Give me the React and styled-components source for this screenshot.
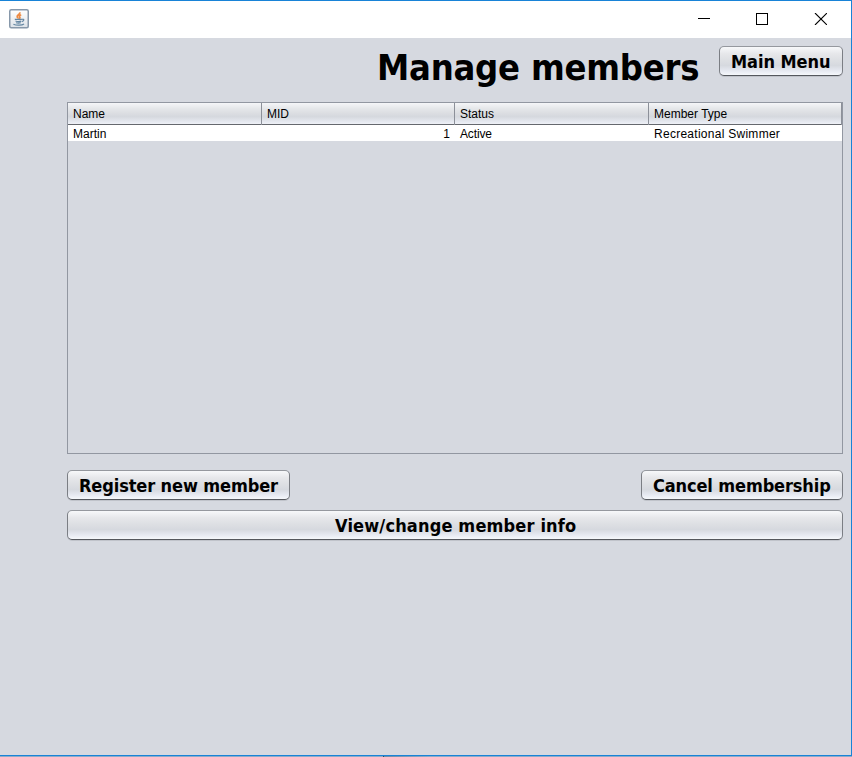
import React from "react";
import styled, { createGlobalStyle } from "styled-components";

const GlobalStyle = createGlobalStyle`
  * { box-sizing: border-box; }
  body { margin: 0; background: #fff; color: #000; overflow: hidden; }
`;

const Window = styled.div`
  width: 852px;
  height: 757px;
  display: flex;
  flex-direction: column;
  background: #d6d9e0;
  border-top: 1px solid #1883d7;
  border-right: 1px solid #1883d7;
`;

const TitleBar = styled.header`
  height: 37px;
  flex: none;
  display: flex;
  align-items: flex-start;
  justify-content: space-between;
  background: #fff;
  padding: 8px 0 0 9px;
`;

const WindowControls = styled.div`
  display: flex;
  gap: 46px;
  padding: 4px 24px 0 0;
`;

const Content = styled.main`
  flex: 1;
  display: flex;
  flex-direction: column;
  padding: 8px 8px 0 67px;
`;

const Heading = styled.div`
  display: flex;
  justify-content: flex-end;
  gap: 19px;
  height: 56px;
`;

const Title = styled.h1`
  margin: 0;
  width: 323px;
  white-space: nowrap;
  font: bold 36px/44px "DejaVu Sans Condensed", "DejaVu Sans", sans-serif;
  font-stretch: condensed;
  letter-spacing: ${(p) => p.$spacing}px;
`;

const Button = styled.button`
  width: ${(p) => p.$width}px;
  height: 30px;
  padding: 0 0 0 ${(p) => p.$inset}px;
  display: block;
  text-align: left;
  white-space: nowrap;
  color: #000;
  font: bold 18px/28px "DejaVu Sans Condensed", "DejaVu Sans", sans-serif;
  font-stretch: condensed;
  letter-spacing: ${(p) => p.$spacing}px;
  border: 1px solid;
  border-color: #95989e #7b7e84 #55585e #7b7e84;
  border-radius: 5px;
  background: linear-gradient(#f7f8fa 0, #e6e7ea 25%, #dddfe3 48%, #d6d9df 66%, #e7eaf2 86%, #f6f8fc 100%);
  box-shadow: 0 1px 0 #c0c3ca;
`;

const ButtonLabel = styled.span`
  display: block;
  height: 28px;
  line-height: 30px;
`;

const TablePane = styled.section`
  height: 352px;
  border: 1px solid #9297a1;
`;

const Row = styled.div`
  display: grid;
  grid-template-columns: 194px 193px 194px 193px;
  font: 12px/16px "Liberation Sans", Arial, sans-serif;
`;

const HeaderRow = styled(Row)`
  height: 22px;
  line-height: 22px;
  border-bottom: 1px solid #65686e;
  background: linear-gradient(#f5f6f8 0, #e4e6e9 28%, #dcdee2 48%, #d5d8de 65%, #e8ebf2 92%, #eff1f6 100%);
`;

const HeaderCell = styled.div`
  padding-left: 5px;
  border-right: 1px solid #8c9099;
`;

const DataRow = styled(Row)`
  height: 16px;
  background: #fff;
`;

const Cell = styled.div`
  padding: 1px 5px 0;
  line-height: 17px;
  text-align: ${(p) => (p.$numeric ? "right" : "left")};
  letter-spacing: ${(p) => p.$spacing || 0}px;
`;

const Actions = styled.div`
  display: flex;
  justify-content: space-between;
  margin: 16px 0 10px;
`;

const BottomEdge = styled.footer`
  height: 2px;
  flex: none;
  margin-right: -1px;
  border-top: 1px solid #1883d7;
  background: linear-gradient(90deg, #8dabc8 0 383px, #34495e 383px 384px, #6f8ca8 384px, #8dabc8 430px);
`;

function JavaIcon() {
  return (
    <svg width="20" height="20" viewBox="0 0 20 20">
      <defs>
        <linearGradient id="tile" x2="0" y2="1">
          <stop stopColor="#fff" />
          <stop offset="1" stopColor="#dde2e8" />
        </linearGradient>
      </defs>
      <rect x=".75" y=".75" width="18.5" height="18" rx="1.5" fill="url(#tile)" stroke="#8798aa" strokeWidth="1.5" />
      <path d="M10.8 3.2c.8 2.1-3.6 3-2.6 4.8.3.8 1 .9.9 1.7M12.2 5.7c-2.6 1.1-2 1.8-1.4 2.4.5.6-.2 1.3-.7 1.6" fill="none" stroke="#ee8a42" strokeWidth="1.7" />
      <path d="M5.8 10.3h7.1M6.5 12c2 .8 4 .7 5.8.1M7 13.7c1.8.6 3.4.5 4.8 0M13 10.3c2.6-.5 2.3 1.7-.1 2.3M4.4 15.2c3.2 1.5 8.6 1.2 10.6-.2" fill="none" stroke="#6587a3" strokeWidth="1.2" />
    </svg>
  );
}

function MinimizeIcon() {
  return <svg width="12" height="12" shapeRendering="crispEdges"><path d="M0 5.5h12" stroke="#000" /></svg>;
}

function MaximizeIcon() {
  return <svg width="12" height="12" shapeRendering="crispEdges"><path d="M.5.5h11v11H.5z" fill="none" stroke="#000" /></svg>;
}

function CloseIcon() {
  return <svg width="13" height="12"><path d="M1 0l12 12M13 0l-12 12" stroke="#000" strokeWidth="1.1" /></svg>;
}

const columns = ["Name", "MID", "Status", "Member Type"];

export default function App() {
  return (
    <>
      <GlobalStyle />
      <Window>
        <TitleBar>
          <JavaIcon />
          <WindowControls>
            <MinimizeIcon />
            <MaximizeIcon />
            <CloseIcon />
          </WindowControls>
        </TitleBar>
        <Content>
          <Heading>
            <Title $spacing={-0.22}>Manage members</Title>
            <Button $width={124} $inset={11} $spacing={-0.05}>
              <ButtonLabel>Main Menu</ButtonLabel>
            </Button>
          </Heading>
          <TablePane>
            <HeaderRow>
              {columns.map((name) => <HeaderCell key={name}>{name}</HeaderCell>)}
            </HeaderRow>
            <DataRow>
              <Cell>Martin</Cell>
              <Cell $numeric>1</Cell>
              <Cell $spacing={-0.15}>Active</Cell>
              <Cell $spacing={0.27}>Recreational Swimmer</Cell>
            </DataRow>
          </TablePane>
          <Actions>
            <Button $width={223} $inset={11} $spacing={-0.11}>
              <ButtonLabel>Register new member</ButtonLabel>
            </Button>
            <Button $width={202} $inset={11} $spacing={-0.12}>
              <ButtonLabel>Cancel membership</ButtonLabel>
            </Button>
          </Actions>
          <Button $width={776} $inset={267} $spacing={0.16}>
            <ButtonLabel>View/change member info</ButtonLabel>
          </Button>
        </Content>
        <BottomEdge />
      </Window>
    </>
  );
}
